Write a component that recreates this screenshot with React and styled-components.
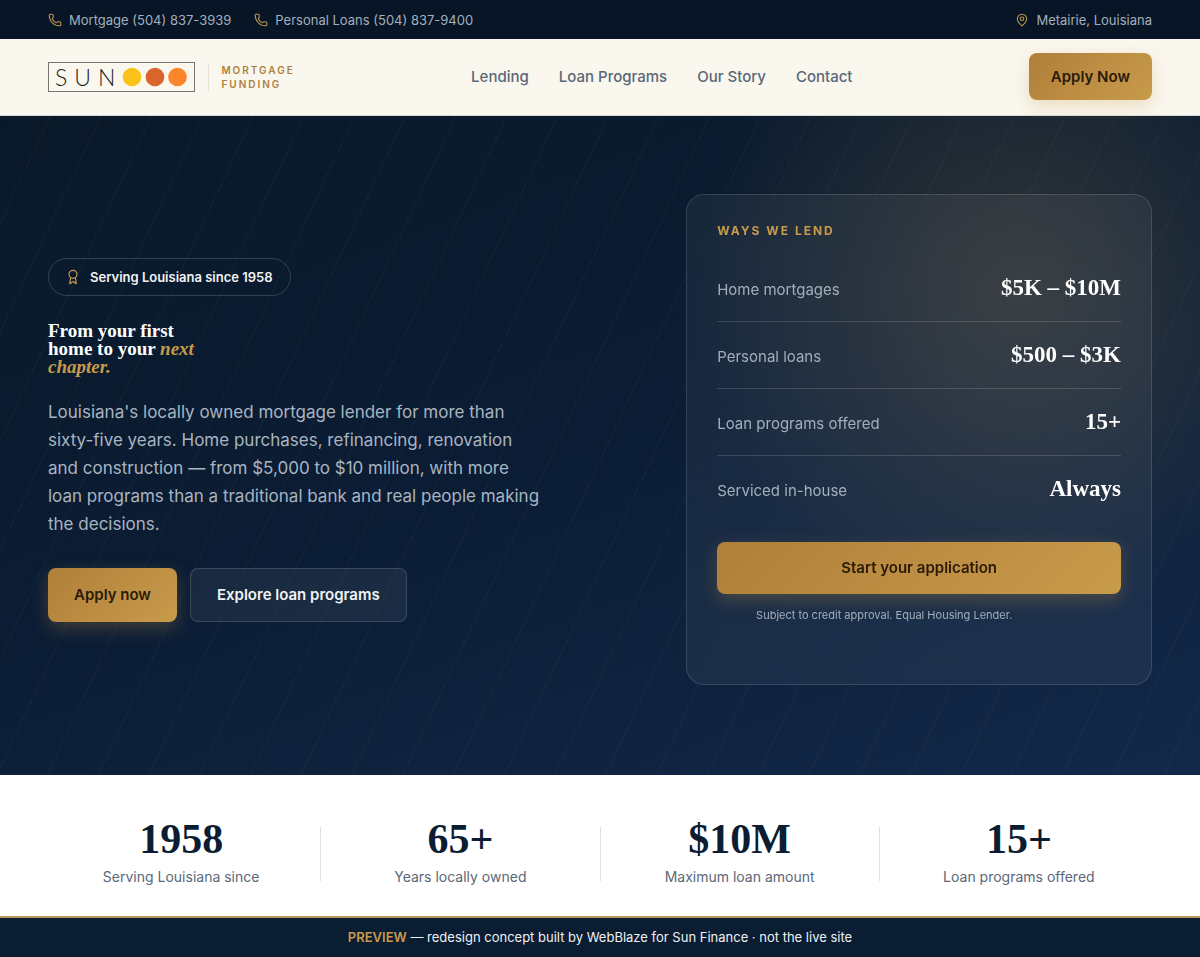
import { Fragment } from "react";
import styled, { createGlobalStyle, css } from "styled-components";
import { Award, MapPin, Phone } from "lucide-react";

const navLinks = ["Lending", "Loan Programs", "Our Story", "Contact"];

const lendingRows = [
  { label: "Home mortgages", value: "$5K – $10M" },
  { label: "Personal loans", value: "$500 – $3K" },
  { label: "Loan programs offered", value: "15+" },
  { label: "Serviced in-house", value: "Always" },
];

const stats = [
  { value: "1958", label: "Serving Louisiana since" },
  { value: "65+", label: "Years locally owned" },
  { value: "$10M", label: "Maximum loan amount" },
  { value: "15+", label: "Loan programs offered" },
];

const App = () => {
  return (
    <>
      <GlobalStyle />
      <TopBar>
        <TopGroup>
          <TopLink href="tel:5048373939">
            <Phone size={14} strokeWidth={1.75} />
            Mortgage (504) 837-3939
          </TopLink>
          <TopLink href="tel:5048379400">
            <Phone size={14} strokeWidth={1.75} />
            Personal Loans (504) 837-9400
          </TopLink>
        </TopGroup>
        <TopText>
          <MapPin size={14} strokeWidth={1.75} />
          Metairie, Louisiana
        </TopText>
      </TopBar>

      <Header>
        <Brand href="#">
          <LogoBox>
            <LogoText>SUN</LogoText>
            <LogoDots viewBox="0 0 66 20" aria-hidden="true">
              <circle cx="10" cy="10" r="9.3" fill="#fbc21a" />
              <circle cx="33" cy="10" r="9.3" fill="#d9652c" />
              <circle cx="55.5" cy="10" r="9.3" fill="#fb852b" />
            </LogoDots>
          </LogoBox>
          <BrandTag>
            Mortgage
            <br />
            Funding
          </BrandTag>
        </Brand>
        <Nav>
          {navLinks.map(link => (
            <NavLink key={link} href="#">{link}</NavLink>
          ))}
        </Nav>
        <Button $size="small">Apply Now</Button>
      </Header>

      <Hero>
        <HeroCopy>
          <Badge>
            <Award size={16} strokeWidth={1.75} />
            Serving Louisiana since 1958
          </Badge>
          <H1>
            From your first home to your <em>next chapter.</em>
          </H1>
          <Lead>
            Louisiana's locally owned mortgage lender for more than sixty-five
            years. Home purchases, refinancing, renovation and construction —
            from $5,000 to $10 million, with more loan programs than a
            traditional bank and real people making the decisions.
          </Lead>
          <Actions>
            <Button>Apply now</Button>
            <Button $variant="ghost">Explore loan programs</Button>
          </Actions>
        </HeroCopy>

        <Card>
          <CardTitle>Ways we lend</CardTitle>
          <Rows>
            {lendingRows.map(row => (
              <Row key={row.label}>
                <dt>{row.label}</dt>
                <dd>{row.value}</dd>
              </Row>
            ))}
          </Rows>
          <Button $size="full">Start your application</Button>
          <Note>Subject to credit approval. Equal Housing Lender.</Note>
        </Card>
      </Hero>

      <Stats>
        {stats.map((stat, i) => (
          <Fragment key={stat.label}>
            {i > 0 && <Divider />}
            <Stat>
              <StatValue>{stat.value}</StatValue>
              <StatLabel>{stat.label}</StatLabel>
            </Stat>
          </Fragment>
        ))}
      </Stats>

      <PreviewBar>
        <strong>PREVIEW</strong> — redesign concept built by WebBlaze for Sun
        Finance · not the live site
      </PreviewBar>
    </>
  );
};

const GlobalStyle = createGlobalStyle`
  :root {
    --navy-dark: #071526;
    --navy: #0b1d33;
    --cream: #faf7ef;
    --gold: #c89b4b;
    --gold-dark: #b07f3a;
    --slate: #5b6878;
    --mist: #a4afbc;
    --serif: "Liberation Serif", "Times New Roman", serif;
  }

  * { box-sizing: border-box; }

  body {
    margin: 0;
    background: #fff;
    font-family: Inter, "Liberation Sans", sans-serif;
    -webkit-font-smoothing: antialiased;
  }

  h1, h2, p, dl, dd { margin: 0; }
  a { color: inherit; text-decoration: none; }
`;

const TopBar = styled.div`
  display: flex;
  justify-content: space-between;
  padding: 10px 48px 9px;
  background: var(--navy-dark);
  color: var(--mist);
  font-size: 13px;
  line-height: 20px;
`;

const TopGroup = styled.div`
  display: flex;
  gap: 23px;
`;

const topItem = css`
  display: flex;
  align-items: center;
  gap: 7px;

  svg { color: var(--gold); }
`;

const TopLink = styled.a`
  ${topItem}
`;

const TopText = styled.span`
  ${topItem}
`;

const Header = styled.header`
  display: flex;
  align-items: center;
  justify-content: space-between;
  padding: 14px 48px 15px;
  background: var(--cream);
  border-bottom: 1px solid #dcdcd6;
`;

const Brand = styled.a`
  display: flex;
  align-items: center;
  gap: 13px;
`;

const LogoBox = styled.span`
  display: flex;
  align-items: center;
  height: 30px;
  padding: 0 6px;
  border: 1px solid #77756f;
`;

const LogoText = styled.span`
  font-family: Lato, sans-serif;
  font-weight: 300;
  font-size: 23px;
  line-height: 28px;
  letter-spacing: 7px;
  color: #1c1c1c;
`;

const LogoDots = styled.svg`
  width: 66px;
  height: 20px;
`;

const BrandTag = styled.span`
  padding-left: 12px;
  border-left: 1px solid #e6e1d5;
  font-size: 10px;
  font-weight: 600;
  line-height: 14px;
  letter-spacing: 2px;
  text-transform: uppercase;
  color: var(--gold-dark);
`;

const Nav = styled.nav`
  display: flex;
  gap: 30px;
`;

const NavLink = styled.a`
  font-size: 15px;
  font-weight: 500;
  line-height: 24px;
  color: var(--slate);
`;

const buttonSizes = {
  small: css`padding: 12px 22px 11px;`,
  regular: css`padding: 15px 26px;`,
  full: css`
    width: 100%;
    padding: 14px 26px;
  `,
};

const Button = styled.button`
  ${props => buttonSizes[props.$size || "regular"]}
  border: 0;
  border-radius: 8px;
  background: linear-gradient(135deg, var(--gold-dark), var(--gold));
  box-shadow: 0 6px 18px rgba(200, 150, 70, 0.28);
  color: #2a1a08;
  font-family: inherit;
  font-size: 15px;
  font-weight: 600;
  line-height: 24px;
  cursor: pointer;

  ${props => props.$variant === "ghost" && css`
    padding: 14px 26px;
    border: 1px solid rgba(255, 255, 255, 0.14);
    background: rgba(255, 255, 255, 0.06);
    box-shadow: none;
    color: #f1f3f5;
  `}
`;

const Hero = styled.section`
  display: grid;
  grid-template-columns: 5fr 4fr;
  align-items: center;
  gap: 56px;
  padding: 78px 48px 90px;
  color: #fff;
  background:
    repeating-linear-gradient(115deg, transparent 0 45px, rgba(255, 255, 255, 0.03) 45px 46px),
    radial-gradient(circle 330px at 85% 26%, rgba(200, 155, 75, 0.2), transparent),
    linear-gradient(160deg, #0a1929 0%, #0b1d35 50%, #13294a 100%);
`;

const HeroCopy = styled.div`
  display: flex;
  flex-direction: column;
  align-items: flex-start;
`;

const Badge = styled.div`
  display: flex;
  align-items: center;
  gap: 9px;
  padding: 8px 17px 8px 16px;
  border: 1px solid rgba(255, 255, 255, 0.16);
  border-radius: 999px;
  font-size: 13px;
  font-weight: 600;
  line-height: 20px;
  color: #f1f3f5;

  svg { color: var(--gold); }
`;

const H1 = styled.h1`
  max-width: 160px;
  margin-top: 26px;
  font-family: var(--serif);
  font-size: 19px;
  font-weight: 700;
  line-height: 18px;

  em { color: var(--gold); }
`;

const Lead = styled.p`
  max-width: 496px;
  margin-top: 22px;
  font-size: 17px;
  line-height: 28px;
  color: #a9b4c0;
`;

const Actions = styled.div`
  display: flex;
  gap: 13px;
  margin-top: 30px;
`;

const Card = styled.aside`
  padding: 26px 30px 60px;
  border: 1px solid rgba(255, 255, 255, 0.13);
  border-radius: 18px;
  background: rgba(255, 255, 255, 0.05);
  backdrop-filter: blur(14px);
`;

const CardTitle = styled.h2`
  font-size: 12px;
  font-weight: 700;
  line-height: 20px;
  letter-spacing: 2px;
  text-transform: uppercase;
  color: var(--gold);
`;

const Rows = styled.dl`
  margin: 14px 0 20px;
`;

const Row = styled.div`
  display: flex;
  align-items: baseline;
  justify-content: space-between;
  padding: 18px 0;

  & + & { border-top: 1px solid rgba(255, 255, 255, 0.14); }

  dt {
    font-size: 15px;
    color: var(--mist);
  }

  dd {
    font-family: var(--serif);
    font-size: 23px;
    font-weight: 700;
    line-height: 30px;
  }
`;

const Note = styled.p`
  max-width: 334px;
  margin-top: 12px;
  font-size: 11px;
  line-height: 18px;
  text-align: center;
  color: var(--mist);
`;

const Stats = styled.section`
  display: flex;
  gap: 6px;
  padding: 42px 48px 29px;
  background: #fff;
`;

const Divider = styled.span`
  width: 1px;
  margin: 10px 0 6px;
  background: #e3e0d8;
`;

const Stat = styled.div`
  flex: 1;
  text-align: center;
`;

const StatValue = styled.div`
  font-family: var(--serif);
  font-size: 42px;
  font-weight: 700;
  line-height: 44px;
  color: var(--navy);
`;

const StatLabel = styled.div`
  margin-top: 6px;
  font-size: 14px;
  line-height: 20px;
  color: var(--slate);
`;

const PreviewBar = styled.footer`
  padding: 9px 48px 10px;
  border-top: 2px solid #b8985a;
  background: var(--navy);
  color: #eef1f4;
  font-size: 13px;
  line-height: 20px;
  text-align: center;

  strong {
    font-weight: 600;
    color: var(--gold);
  }
`;

export default App;
